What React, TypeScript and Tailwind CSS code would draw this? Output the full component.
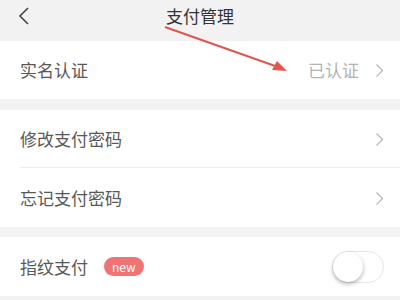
import React from "react";

const font = { fontFamily: '"Noto Sans CJK SC", "Noto Sans", sans-serif' };

const Chevron = ({ className = "" }: { className?: string }) => (
  <svg width="9" height="15" viewBox="0 0 9 15" className={className}>
    <path d="M1.5 1.5 L7.5 7.5 L1.5 13.5" fill="none" stroke="currentColor" strokeWidth="1.3" />
  </svg>
);

const Row = ({
  label,
  right,
  divider,
}: {
  label: string;
  right?: string;
  divider?: boolean;
}) => (
  <div className="relative flex h-[58px] items-center bg-white pl-5 pr-4">
    <span className="text-[17px] text-[#585858]">{label}</span>
    <div className="ml-auto flex items-center gap-[16px]">
      {right && <span className="text-[17px] text-[#b3b3b3]">{right}</span>}
      <Chevron className="text-[#b8b8b8]" />
    </div>
    {divider && <div className="absolute bottom-0 left-5 right-0 h-px bg-[#ececec]" />}
  </div>
);

export default function App() {
  return (
    <div className="relative h-[300px] w-[400px] overflow-hidden bg-[#f2f2f2]" style={font}>
      {/* header */}
      <div className="relative flex h-[41px] items-center justify-center bg-[#f2f2f2]">
        <svg width="12" height="20" viewBox="0 0 12 20" className="absolute left-[18px] top-[6px] text-[#444]">
          <path d="M10 2 L2 10 L10 18" fill="none" stroke="currentColor" strokeWidth="1.6" />
        </svg>
        <span className="-mt-[10px] text-[17px] text-[#333]">支付管理</span>
      </div>

      <Row label="实名认证" right="已认证" />

      <div className="h-[11px]" />
      <Row label="修改支付密码" divider />
      <div className="h-px bg-white" />
      <Row label="忘记支付密码" />

      <div className="h-[10px]" />
      <div className="flex h-[59px] items-center bg-white pl-5 pr-4">
        <span className="text-[17px] text-[#585858]">指纹支付</span>
        <span className="ml-4 flex h-[19px] items-center rounded-full bg-[#f07373] px-[8px] text-[12px] leading-none text-white">
          new
        </span>
        <div className="ml-auto flex h-[32px] w-[52px] items-center rounded-full border border-[#e6e6e6] bg-white">
          <div className="h-[30px] w-[30px] rounded-full bg-white shadow-[0_2px_4px_rgba(0,0,0,0.3)]" />
        </div>
      </div>

      {/* red annotation arrow */}
      <svg width="400" height="300" className="pointer-events-none absolute left-0 top-0">
        <line x1="165" y1="27" x2="278" y2="67" stroke="#e25450" strokeWidth="2" />
        <polygon points="287,71 272,70 277,61" fill="#e25450" />
      </svg>
    </div>
  );
}
